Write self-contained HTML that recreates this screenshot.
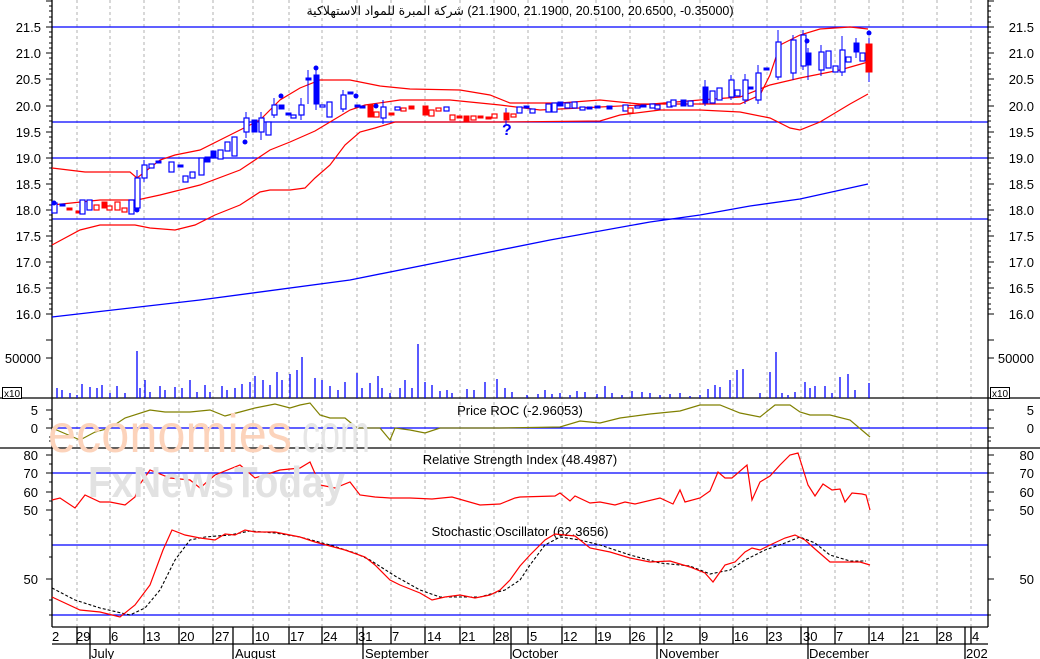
<!DOCTYPE html>
<html><head><meta charset="utf-8"><style>
html,body{margin:0;padding:0;background:#fff;width:1040px;height:659px;overflow:hidden;position:relative}
svg{display:block}
text{font-family:"Liberation Sans","DejaVu Sans",sans-serif;fill:#000}
.bh{fill:#fff;stroke:#00f;stroke-width:1.2}
.bf{fill:#00f;stroke:#00f;stroke-width:1}
.rh{fill:#fff;stroke:#f00;stroke-width:1.2}
.rf{fill:#f00;stroke:#f00;stroke-width:1}
#title{position:absolute;left:0;top:3px;width:1040px;text-align:center;font:12.5px "Liberation Sans","DejaVu Sans",sans-serif;direction:ltr;white-space:nowrap}
</style></head><body>
<svg width="1040" height="659" viewBox="0 0 1040 659" xmlns="http://www.w3.org/2000/svg" font-size="13">
<g stroke="#b0b0b0" stroke-dasharray="3,3" stroke-width="1">
<path d="M77 0V627M110 0V627M144 0V627M179 0V627M213 0V627M253 0V627M289 0V627M322 0V627M357 0V627M391 0V627M425 0V627M460 0V627M494 0V627M528 0V627M562 0V627M596 0V627M630 0V627M664 0V627M700 0V627M733 0V627M767 0V627M801 0V627M835 0V627M869 0V627M903 0V627M937 0V627M971 0V627"/>
</g>
<g stroke="#00f" stroke-width="1.3">
<path d="M52 27H988M52 122H988M52 158H988M52 219H988M52 473H988M52 545H988M52 615H988M52 428H988"/>
</g>
<g stroke="#000" stroke-width="1.3" fill="none">
<path d="M52 0V627M988 0V627M0 398H1040M0 448H1040M52 627H988M52 644H988"/>
<path d="M90 627V659M233 627V659M363 627V659M511 627V659M657 627V659M808 627V659M965 627V659"/>
<path d="M77 627V644M110 627V644M144 627V644M179 627V644M213 627V644M253 627V644M289 627V644M322 627V644M357 627V644M391 627V644M425 627V644M460 627V644M494 627V644M528 627V644M562 627V644M596 627V644M630 627V644M664 627V644M700 627V644M733 627V644M767 627V644M801 627V644M835 627V644M869 627V644M903 627V644M937 627V644M971 627V644"/>
</g>
<g stroke="#000" stroke-width="1">
<path d="M46 1H52M46 27H52M46 53H52M46 79H52M46 106H52M46 132H52M46 158H52M46 184H52M46 210H52M46 236H52M46 262H52M46 288H52M46 314H52M46 340H52M46 358H52M46 410H52M46 428H52M46 455H52M46 473H52M46 492H52M46 510H52M46 579H52"/>
<path d="M988 1H994M988 27H994M988 53H994M988 79H994M988 106H994M988 132H994M988 158H994M988 184H994M988 210H994M988 236H994M988 262H994M988 288H994M988 314H994M988 340H994M988 358H994M988 410H994M988 428H994M988 455H994M988 473H994M988 492H994M988 510H994M988 579H994"/>
<path d="M49 6H52M49 11H52M49 17H52M49 22H52M49 32H52M49 37H52M49 43H52M49 48H52M49 58H52M49 64H52M49 69H52M49 74H52M49 85H52M49 90H52M49 95H52M49 100H52M49 111H52M49 116H52M49 121H52M49 127H52M49 137H52M49 142H52M49 148H52M49 153H52M49 163H52M49 168H52M49 174H52M49 179H52M49 189H52M49 194H52M49 200H52M49 205H52M49 215H52M49 220H52M49 226H52M49 231H52M49 241H52M49 246H52M49 252H52M49 257H52M49 267H52M49 272H52M49 278H52M49 283H52M49 293H52M49 298H52M49 304H52M49 309H52M49 419H52M49 437H52M49 441H52M49 464H52M49 482H52M49 501H52M49 520H52M49 535H52M49 557H52M49 600H52M49 615H52"/>
<path d="M988 6H991M988 11H991M988 17H991M988 22H991M988 32H991M988 37H991M988 43H991M988 48H991M988 58H991M988 64H991M988 69H991M988 74H991M988 85H991M988 90H991M988 95H991M988 100H991M988 111H991M988 116H991M988 121H991M988 127H991M988 137H991M988 142H991M988 148H991M988 153H991M988 163H991M988 168H991M988 174H991M988 179H991M988 189H991M988 194H991M988 200H991M988 205H991M988 215H991M988 220H991M988 226H991M988 231H991M988 241H991M988 246H991M988 252H991M988 257H991M988 267H991M988 272H991M988 278H991M988 283H991M988 293H991M988 298H991M988 304H991M988 309H991M988 419H991M988 437H991M988 441H991M988 464H991M988 482H991M988 501H991M988 520H991M988 535H991M988 557H991M988 600H991M988 615H991"/>
</g>
<g font-size="13">
<text x="41" y="32" text-anchor="end">21.5</text><text x="41" y="58" text-anchor="end">21.0</text><text x="41" y="84" text-anchor="end">20.5</text><text x="41" y="111" text-anchor="end">20.0</text><text x="41" y="137" text-anchor="end">19.5</text><text x="41" y="163" text-anchor="end">19.0</text><text x="41" y="189" text-anchor="end">18.5</text><text x="41" y="215" text-anchor="end">18.0</text><text x="41" y="241" text-anchor="end">17.5</text><text x="41" y="267" text-anchor="end">17.0</text><text x="41" y="293" text-anchor="end">16.5</text><text x="41" y="319" text-anchor="end">16.0</text><text x="41" y="363" text-anchor="end">50000</text>
<text x="38" y="415" text-anchor="end">5</text><text x="38" y="433" text-anchor="end">0</text>
<text x="38" y="460" text-anchor="end">80</text><text x="38" y="478" text-anchor="end">70</text><text x="38" y="497" text-anchor="end">60</text><text x="38" y="515" text-anchor="end">50</text><text x="38" y="584" text-anchor="end">50</text>
<text x="1034" y="32" text-anchor="end">21.5</text><text x="1034" y="58" text-anchor="end">21.0</text><text x="1034" y="84" text-anchor="end">20.5</text><text x="1034" y="111" text-anchor="end">20.0</text><text x="1034" y="137" text-anchor="end">19.5</text><text x="1034" y="163" text-anchor="end">19.0</text><text x="1034" y="189" text-anchor="end">18.5</text><text x="1034" y="215" text-anchor="end">18.0</text><text x="1034" y="241" text-anchor="end">17.5</text><text x="1034" y="267" text-anchor="end">17.0</text><text x="1034" y="293" text-anchor="end">16.5</text><text x="1034" y="319" text-anchor="end">16.0</text><text x="1034" y="363" text-anchor="end">50000</text>
<text x="1034" y="415" text-anchor="end">5</text><text x="1034" y="433" text-anchor="end">0</text>
<text x="1034" y="460" text-anchor="end">80</text><text x="1034" y="478" text-anchor="end">70</text><text x="1034" y="497" text-anchor="end">60</text><text x="1034" y="515" text-anchor="end">50</text><text x="1034" y="584" text-anchor="end">50</text>
</g>
<rect x="2.5" y="387.5" width="19" height="11" fill="#fff" stroke="#000"/><text x="4" y="397" font-size="10">x10</text>
<rect x="990.5" y="387.5" width="19" height="11" fill="#fff" stroke="#000"/><text x="992" y="397" font-size="10">x10</text>
<g font-size="13">
<text x="52" y="641">2</text><text x="76" y="641">29</text><text x="111" y="641">6</text><text x="146" y="641">13</text><text x="180" y="641">20</text><text x="215" y="641">27</text><text x="255" y="641">10</text><text x="290" y="641">17</text><text x="323" y="641">24</text><text x="358" y="641">31</text><text x="392" y="641">7</text><text x="427" y="641">14</text><text x="461" y="641">21</text><text x="495" y="641">28</text><text x="530" y="641">5</text><text x="563" y="641">12</text><text x="597" y="641">19</text><text x="631" y="641">26</text><text x="666" y="641">2</text><text x="701" y="641">9</text><text x="734" y="641">16</text><text x="768" y="641">23</text><text x="803" y="641">30</text><text x="836" y="641">7</text><text x="870" y="641">14</text><text x="905" y="641">21</text><text x="938" y="641">28</text><text x="972" y="641">4</text>
<text x="91" y="658">July</text><text x="235" y="658">August</text><text x="365" y="658">September</text><text x="512" y="658">October</text><text x="659" y="658">November</text><text x="809" y="658">December</text><text x="966" y="658">202</text>
</g>
<text x="520" y="415" text-anchor="middle" font-size="13">Price ROC (-2.96053)</text>
<text x="520" y="464" text-anchor="middle" font-size="13">Relative Strength Index (48.4987)</text>
<text x="520" y="536" text-anchor="middle" font-size="13">Stochastic Oscillator (62.3656)</text>
<polyline fill="none" stroke="#00f" stroke-width="1.3" points="52,317 200,300 350,280 450,260 550,240 650,222 700,215 750,206 800,199 868,184"/>
<g fill="none" stroke="#f00" stroke-width="1.2">
<polyline points="52,168 85,172 130,172 137,178 160,160 175,155 200,150 230,135 260,120 280,100 300,88 320,80 350,80 380,86 410,89 460,90 490,95 510,103 560,103 600,100 640,104 700,104 740,104 760,95 770,75 780,45 800,35 820,29 850,27 868,29"/>
<polyline points="52,205 100,200 137,200 160,195 200,185 240,170 255,160 270,150 290,142 315,131 330,122 350,110 365,105 400,100 450,100 500,105 540,110 580,108 640,105 700,100 740,97 770,85 800,78 840,70 868,62"/>
<polyline points="52,245 80,230 100,225 135,225 150,228 175,230 195,225 215,215 240,205 260,192 270,190 290,190 305,188 315,178 330,165 345,145 360,132 375,128 395,122 430,122 500,122 600,121 620,115 660,110 700,110 740,112 770,118 790,128 800,130 820,122 850,104 868,94"/>
</g>
<g>
<g stroke="#00f" stroke-width="1"><path d="M137 170V212M144 160V182M246 112V138M261 112V140M274 98V118M301 98V120M308 70V104M316 70V110M343 90V112M383 100V124M506 108V124M705 80V106M731 75V100M745 74V104M758 65V104M778 30V80M793 35V80M803 30V70M808 48V80M821 45V76M842 36V76M856 38V58M869 38V82"/></g>
<rect class="bh" x="52" y="203" width="5" height="10"/><rect class="bf" x="60" y="204" width="5" height="2"/><rect class="rf" x="67" y="208" width="5" height="2"/><rect class="rf" x="76" y="211" width="5" height="2"/>
<rect class="bh" x="80" y="200" width="5" height="14"/><rect class="bh" x="87" y="200" width="5" height="10"/><rect class="rh" x="94" y="205" width="5" height="5"/><rect class="rf" x="102" y="202" width="5" height="6"/><rect class="rh" x="107" y="206" width="5" height="4"/><rect class="rh" x="115" y="202" width="5" height="8"/><rect class="rh" x="122" y="208" width="5" height="4"/><rect class="bh" x="129" y="200" width="5" height="14"/>
<rect class="bh" x="135" y="178" width="5" height="30"/><rect class="bh" x="142" y="165" width="5" height="13"/><rect class="bh" x="149" y="164" width="5" height="4"/><rect class="bf" x="156" y="161" width="5" height="2"/><rect class="bh" x="169" y="162" width="5" height="10"/><rect class="bf" x="178" y="165" width="5" height="2"/><rect class="bh" x="183" y="176" width="5" height="6"/><rect class="bh" x="190" y="172" width="5" height="6"/><rect class="bh" x="199" y="158" width="5" height="17"/><rect class="bf" x="205" y="157" width="5" height="5"/><rect class="bf" x="211" y="151" width="5" height="7"/><rect class="bh" x="218" y="150" width="5" height="9"/><rect class="bh" x="225" y="142" width="5" height="9"/><rect class="bh" x="232" y="137" width="5" height="19"/>
<rect class="bh" x="244" y="118" width="5" height="14"/><rect class="bf" x="252" y="120" width="5" height="12"/><rect class="bh" x="259" y="118" width="5" height="14"/><rect class="bh" x="266" y="122" width="5" height="13"/><rect class="bh" x="272" y="105" width="5" height="10"/><rect class="bf" x="279" y="105" width="5" height="4"/><rect class="bf" x="286" y="113" width="5" height="2"/><rect class="bh" x="291" y="115" width="5" height="3"/><rect class="bh" x="299" y="105" width="5" height="10"/><rect class="bf" x="306" y="78" width="5" height="2"/><rect class="bf" x="314" y="75" width="5" height="29"/><rect class="bh" x="320" y="105" width="5" height="2"/><rect class="bh" x="327" y="102" width="5" height="15"/><rect class="bh" x="341" y="95" width="5" height="14"/><rect class="bf" x="348" y="92" width="5" height="2"/><rect class="bf" x="355" y="105" width="5" height="2"/><rect class="bf" x="360" y="106" width="5" height="2"/>
<rect class="rf" x="368" y="105" width="5" height="12"/><rect class="rh" x="374" y="112" width="5" height="5"/><rect class="bh" x="381" y="107" width="5" height="11"/><rect class="rf" x="389" y="113" width="5" height="2"/><rect class="bh" x="395" y="107" width="5" height="3"/><rect class="rh" x="401" y="108" width="5" height="3"/><rect class="rf" x="409" y="106" width="5" height="3"/><rect class="rf" x="423" y="106" width="5" height="9"/><rect class="rh" x="429" y="110" width="5" height="6"/><rect class="rh" x="436" y="108" width="5" height="3"/><rect class="bh" x="444" y="107" width="5" height="4"/><rect class="rh" x="450" y="115" width="5" height="5"/><rect class="rf" x="457" y="116" width="5" height="2"/><rect class="rf" x="464" y="116" width="5" height="5"/><rect class="rh" x="471" y="116" width="5" height="4"/><rect class="rf" x="478" y="116" width="5" height="2"/><rect class="rf" x="486" y="117" width="5" height="2"/><rect class="rh" x="492" y="114" width="5" height="4"/><rect class="rf" x="504" y="113" width="5" height="7"/><rect class="rh" x="511" y="114" width="5" height="3"/><rect class="bh" x="517" y="107" width="5" height="6"/>
<rect class="bf" x="524" y="106" width="5" height="2"/><rect class="bh" x="530" y="109" width="5" height="4"/><rect class="bh" x="546" y="104" width="5" height="8"/><rect class="bh" x="552" y="103" width="5" height="9"/><rect class="bf" x="558" y="102" width="5" height="4"/><rect class="bh" x="565" y="103" width="5" height="5"/><rect class="bh" x="572" y="102" width="5" height="6"/><rect class="bh" x="580" y="107" width="5" height="3"/><rect class="bf" x="587" y="107" width="5" height="2"/><rect class="bf" x="595" y="106" width="5" height="2"/><rect class="bf" x="607" y="106" width="5" height="3"/><rect class="bh" x="623" y="105" width="5" height="6"/><rect class="rh" x="628" y="108" width="5" height="5"/><rect class="bh" x="635" y="106" width="5" height="2"/><rect class="bf" x="641" y="105" width="5" height="2"/><rect class="bh" x="650" y="104" width="5" height="4"/><rect class="bh" x="655" y="105" width="5" height="4"/><rect class="bh" x="667" y="102" width="5" height="5"/><rect class="bh" x="671" y="100" width="5" height="6"/><rect class="bf" x="681" y="100" width="5" height="6"/><rect class="bh" x="688" y="101" width="5" height="5"/>
<rect class="bf" x="703" y="87" width="5" height="16"/><rect class="bh" x="710" y="91" width="5" height="12"/><rect class="bh" x="717" y="88" width="5" height="12"/><rect class="bh" x="729" y="80" width="5" height="17"/><rect class="bh" x="735" y="90" width="5" height="6"/><rect class="bh" x="743" y="80" width="5" height="20"/><rect class="bf" x="748" y="87" width="5" height="2"/><rect class="bh" x="756" y="73" width="5" height="27"/><rect class="bf" x="764" y="68" width="5" height="2"/><rect class="bh" x="776" y="42" width="5" height="35"/><rect class="bh" x="791" y="40" width="5" height="33"/><rect class="bh" x="801" y="35" width="5" height="31"/><rect class="bf" x="806" y="53" width="5" height="12"/><rect class="bh" x="819" y="52" width="5" height="18"/><rect class="bh" x="826" y="51" width="5" height="17"/><rect class="bh" x="833" y="66" width="5" height="6"/><rect class="bh" x="840" y="50" width="5" height="22"/><rect class="bh" x="846" y="57" width="5" height="5"/><rect class="bf" x="854" y="43" width="5" height="9"/><rect class="bh" x="860" y="53" width="5" height="8"/><rect class="rf" x="866" y="44" width="6" height="28"/>
<g fill="#00f"><circle cx="54" cy="203" r="2.5"/><circle cx="137" cy="210" r="2.5"/><circle cx="245" cy="142" r="2.5"/><circle cx="281" cy="96" r="2.5"/><circle cx="316" cy="68" r="2.5"/><circle cx="356" cy="96" r="2.5"/><circle cx="376" cy="106" r="2.5"/><circle cx="807" cy="41" r="2.5"/><circle cx="869" cy="33" r="2.5"/></g>
<text x="502" y="135" font-weight="bold" font-size="16" style="fill:#00f">?</text>
</g>
<g stroke="#00f" stroke-width="1.3"><path d="M57 398V388M62 398V390M70 398V393M77 398V395M82 398V384M90 398V387M97 398V388M102 398V385M110 398V393M117 398V386M125 398V393M137 398V351M140 398V388M145 398V380M150 398V392M160 398V386M165 398V390M175 398V387M182 398V388M190 398V380M197 398V392M205 398V385M210 398V392M222 398V386M227 398V390M235 398V388M242 398V384M250 398V382M255 398V376M263 398V380M270 398V385M277 398V372M282 398V380M290 398V374M297 398V370M302 398V357M315 398V378M322 398V380M330 398V386M338 398V390M345 398V382M357 398V373M362 398V388M370 398V383M378 398V376M382 398V388M390 398V393M400 398V388M405 398V380M412 398V388M418 398V344M425 398V382M432 398V385M440 398V391M447 398V390M452 398V393M467 398V389M474 398V390M485 398V382M497 398V379M505 398V388M512 398V392M527 398V395M538 398V394M545 398V390M552 398V394M560 398V393M570 398V395M577 398V391M585 398V392M597 398V394M605 398V386M612 398V393M622 398V395M632 398V391M642 398V392M650 398V393M660 398V395M670 398V394M680 398V393M690 398V396M700 398V395M708 398V389M715 398V385M720 398V387M730 398V380M737 398V370M743 398V369M760 398V393M770 398V372M776 398V352M782 398V393M788 398V395M795 398V392M805 398V382M810 398V388M815 398V386M825 398V386M832 398V393M840 398V377M848 398V374M855 398V390M869 398V383"/></g>
<polyline fill="none" stroke="#808000" stroke-width="1.2" points="52,428 80,440 95,432 110,428 125,418 150,410 165,412 190,412 210,410 225,416 240,412 255,408 275,404 290,408 300,405 310,403 320,415 330,418 345,418 357,428 370,428 380,428 390,440 395,428 410,430 425,433 440,428 500,428 560,427 580,421 600,423 620,418 650,414 680,411 700,405 720,405 740,413 760,417 775,405 790,405 800,412 810,415 830,415 850,420 870,437"/>
<polyline fill="none" stroke="#f00" stroke-width="1.2" points="52,500 60,498 75,508 85,495 100,502 110,502 125,505 135,497 140,484 150,470 170,478 190,480 200,488 215,475 240,465 255,478 280,470 300,468 310,462 320,485 335,488 350,482 360,495 375,497 390,498 410,498 432,499 452,497 480,505 500,504 515,498 520,497 555,496 560,493 570,501 575,496 590,503 600,502 615,505 625,502 635,504 660,498 673,504 680,490 685,502 700,498 710,491 718,472 725,478 732,478 747,465 752,500 760,482 770,476 780,465 790,455 798,453 808,485 815,496 823,484 832,490 840,489 845,502 852,493 862,494 866,495 870,510"/>
<polyline fill="none" stroke="#000" stroke-width="1.1" stroke-dasharray="3,2" points="52,588 75,600 100,608 130,615 145,608 160,590 175,560 190,540 205,537 230,535 250,531 275,533 300,537 330,545 355,553 370,560 395,576 420,590 440,597 480,597 505,590 520,580 530,565 545,545 560,537 580,540 600,545 630,555 660,563 690,566 710,574 730,570 745,560 765,550 785,543 800,537 815,543 830,555 850,561 866,561"/>
<polyline fill="none" stroke="#f00" stroke-width="1.2" points="52,597 80,610 100,612 120,617 135,605 150,585 163,550 172,530 185,535 200,538 215,540 225,534 235,535 245,530 255,532 275,532 290,535 300,537 315,542 330,546 345,550 365,557 375,565 390,580 400,585 420,593 432,600 445,597 460,595 475,598 490,595 500,590 510,580 520,566 530,555 545,540 555,534 575,536 590,548 610,552 630,558 650,562 670,561 690,567 705,573 713,582 725,565 735,562 745,552 752,548 760,550 770,545 785,538 795,535 805,540 815,549 830,562 840,562 860,562 870,565"/>
<text x="48" y="452" font-size="54" textLength="244" lengthAdjust="spacingAndGlyphs" style="fill:#fcd3bb">economies</text>
<text x="292" y="452" font-size="54" textLength="78" lengthAdjust="spacingAndGlyphs" style="fill:#e6e6e6">.com</text>
<text x="88" y="497" font-size="44" font-weight="bold" textLength="257" lengthAdjust="spacingAndGlyphs" style="fill:#e2e2e2">FxNewsToday</text>
</svg>
<div id="title"><bdi dir="rtl">شركة المبرة للمواد الاستهلاكية</bdi> <span dir="ltr">(21.1900, 21.1900, 20.5100, 20.6500, -0.35000)</span></div>
</body></html>
